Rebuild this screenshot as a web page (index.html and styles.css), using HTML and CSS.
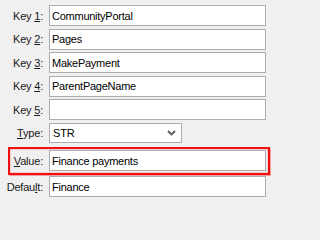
FILE: index.html
```html
<!DOCTYPE html>
<html>
<head>
<meta charset="utf-8">
<link rel="stylesheet" href="styles.css">
</head>
<body>
<div class="form">
  <div class="row">
    <label class="lbl">Key <u>1</u>:</label>
    <input class="field" type="text" value="CommunityPortal">
  </div>
  <div class="row">
    <label class="lbl">Key <u>2</u>:</label>
    <input class="field" type="text" value="Pages">
  </div>
  <div class="row">
    <label class="lbl">Key <u>3</u>:</label>
    <input class="field" type="text" value="MakePayment">
  </div>
  <div class="row">
    <label class="lbl">Key <u>4</u>:</label>
    <input class="field" type="text" value="ParentPageName">
  </div>
  <div class="row">
    <label class="lbl">Key <u>5</u>:</label>
    <input class="field" type="text" value="">
  </div>
  <div class="row row-select">
    <label class="lbl"><u>T</u>ype:</label>
    <div class="select">
      <span class="select-text">STR</span>
      <svg class="chev" width="9" height="6" viewBox="0 0 9 6"><polyline points="1,1 4.5,4.5 8,1" fill="none" stroke="#5a5a5a" stroke-width="1.8"/></svg>
    </div>
  </div>
  <div class="row row-highlight">
    <label class="lbl lbl-inner"><u>V</u>alue:</label>
    <input class="field" type="text" value="Finance payments">
  </div>
  <div class="row row-after">
    <label class="lbl">Defau<u>l</u>t:</label>
    <input class="field" type="text" value="Finance">
  </div>
</div>
</body>
</html>
```

FILE: styles.css
```css
html, body {
  margin: 0;
  padding: 0;
  background: #f0f0f0;
}

body {
  width: 271px;
  height: 202px;
  overflow: hidden;
  font-family: "Liberation Sans", Arial, sans-serif;
  font-size: 11px;
  letter-spacing: -0.2px;
  color: #000;
}

.form {
  display: flex;
  flex-direction: column;
  gap: 2.5px;
  padding: 5px 5px 0 4px;
}

.row {
  display: flex;
  align-items: center;
  height: 21px;
}

.lbl {
  flex: 0 0 39px;
  width: 39px;
  margin-right: 6px;
  text-align: right;
  white-space: nowrap;
  color: #1a1a1a;
}

.lbl-inner {
  flex-basis: 33px;
  width: 33px;
}

.lbl u {
  text-decoration-thickness: 1px;
  text-underline-offset: 1px;
}

.field {
  flex: 1;
  min-width: 0;
  box-sizing: border-box;
  height: 21px;
  margin: 0;
  padding: 0 2px;
  border: 1px solid #acacb2;
  border-radius: 0;
  background: #fff;
  font: inherit;
  letter-spacing: -0.25px;
  color: #000;
  outline: none;
}

.row-select {
  height: 20px;
}

.select {
  box-sizing: border-box;
  width: 133px;
  height: 20px;
  display: flex;
  align-items: center;
  justify-content: space-between;
  padding: 0 5px 0 3px;
  border: 1px solid #acacb2;
  background: #fff;
}

.chev {
  display: block;
  margin-top: 1px;
}

.row-highlight {
  box-sizing: border-box;
  height: 28px;
  margin: 2px -4px 0 4px;
  padding: 1px 2px 2px 0;
  border: 2px solid #f01010;
  box-shadow: 0 0 1px 0.5px rgba(255, 60, 60, 0.45), inset 0 0 1px 0.5px rgba(255, 60, 60, 0.35);
}

.row-after {
  margin-top: -1.5px;
}
```
